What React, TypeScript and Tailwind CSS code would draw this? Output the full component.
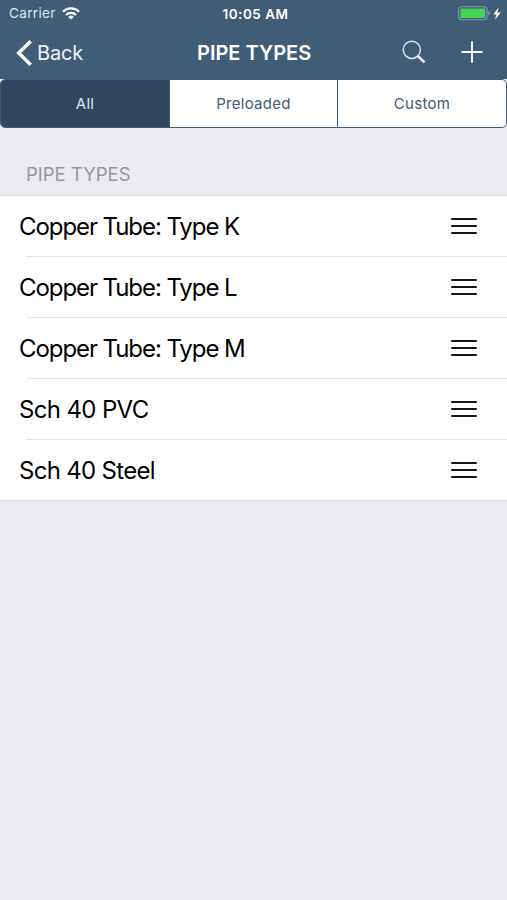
import React from 'react'

type PipeType = {
  id: number;
  name: string;
  tracking: string;
};

const pipeTypes: PipeType[] = [
  { id: 1, name: "Copper Tube: Type K", tracking: "tracking-[-1.07px]" },
  { id: 2, name: "Copper Tube: Type L", tracking: "tracking-[-1.07px]" },
  { id: 3, name: "Copper Tube: Type M", tracking: "tracking-[-1.07px]" },
  { id: 4, name: "Sch 40 PVC", tracking: "tracking-[-0.65px]" },
  { id: 5, name: "Sch 40 Steel", tracking: "tracking-[-0.7px]" },
];

const StatusBar = () => {
  return (
    <div className="grid h-[27px] grid-cols-[1fr_auto_1fr] items-center pl-[9px] pr-[5px] text-[13.5px]">
      <div className="flex items-center gap-[6px]">
        <span className="tracking-[0.35px] text-[#dde8f2]">Carrier</span>
        <svg width="18" height="13" viewBox="0 0 18 13" fill="none" stroke="#fff" strokeWidth="2.1">
          <path d="M1 4.7a11.4 11.4 0 0 1 16 0" />
          <path d="M4 7.9a7.2 7.2 0 0 1 10 0" />
          <path d="M9 12.6 6.2 9.9a4 4 0 0 1 5.6 0z" fill="#fff" stroke="none" />
        </svg>
      </div>
      <span className="mt-0.5 font-semibold tracking-[0.5px]">10:05 AM</span>
      <div className="flex items-center justify-end">
        <svg width="44" height="16" viewBox="0 0 44 16">
          <rect x="0.6" y="0.7" width="28.4" height="13" rx="3" fill="none" stroke="#8299ad" strokeWidth="1.1" />
          <rect x="2.4" y="2.5" width="24.8" height="9.4" rx="1" fill="#43d551" />
          <path d="M30.2 5.1q1.6.4 1.6 2.1t-1.6 2.1z" fill="#8299ad" />
          <path d="M40.6 1.6 35.2 8.6h3.2L37 13.8l5.8-7.2h-3.4z" fill="#fff" />
        </svg>
      </div>
    </div>
  )
}

const NavBar = () => {
  return (
    <div className="grid h-[52px] grid-cols-[181px_auto_1fr] items-center pl-4 pr-6">
      <button className="flex items-center gap-[4px] text-xl text-[#eef5fb]">
        <svg width="17" height="26" viewBox="0 0 17 26" fill="none" stroke="#fff" strokeWidth="3.4">
          <path d="M14.7 1.2 2.7 13l12 11.8" />
        </svg>
        <span className="tracking-[-0.15px]">Back</span>
      </button>
      <h1 className="text-xl font-semibold">PIPE TYPES</h1>
      <div className="-mt-0.5 flex items-center justify-end gap-[35px]">
        <svg width="24" height="24" viewBox="0 0 24 24" fill="none">
          <circle cx="9.8" cy="9.8" r="8.6" stroke="#dbe6ef" strokeWidth="1.5" />
          <path d="m16 16.2 6.4 6.2" stroke="#fff" strokeWidth="2.5" />
        </svg>
        <svg width="22" height="22" viewBox="0 0 22 22" stroke="#fff" strokeWidth="1.9">
          <path d="M11 .5v21M.5 11h21" />
        </svg>
      </div>
    </div>
  )
}

const Tabs = () => {
  return (
    <div className="bg-[#ebeaf0]">
      <div className="grid h-[49px] grid-cols-[168px_169px_1fr] overflow-hidden rounded-[5px] border border-[#405d77] bg-white text-[15px] tracking-[0.3px] text-[#455b72]">
        <button className="bg-[#30475f] pt-0.5 text-[#dce6ef]">All</button>
        <button className="border-x border-[#405d77] pt-0.5">Preloaded</button>
        <button className="pt-0.5">Custom</button>
      </div>
    </div>
  )
}

const App = () => {
  return (
    <div className="flex h-[900px] w-[507px] flex-col overflow-hidden bg-[#ebeaf0] font-[Inter,sans-serif]">
      <header className="bg-[#405d77] text-white">
        <StatusBar />
        <NavBar />
      </header>
      <Tabs />
      <h2 className="h-[68px] border-b border-[#e0dfe3] pl-[26px] pt-[31px] text-[18.5px] leading-[30px] text-[#97979b]">
        PIPE TYPES
      </h2>
      <ul className="border-b border-[#dddce1] bg-white">
        {pipeTypes.map((pipe) => (
          <li key={pipe.id} className="group">
            <div className="flex h-[60px] items-center justify-between pl-[19px] pr-[30px]">
              <span className={`pt-px text-2xl text-black ${pipe.tracking}`}>{pipe.name}</span>
              <div className="flex w-[26px] flex-col gap-[5px]">
                <span className="h-0.5 rounded-full bg-[#161616]" />
                <span className="h-0.5 rounded-full bg-[#161616]" />
                <span className="h-0.5 rounded-full bg-[#161616]" />
              </div>
            </div>
            <div className="ml-[26px] h-px bg-[#e4e4e6] group-last:hidden" />
          </li>
        ))}
      </ul>
    </div>
  )
}

export default App
